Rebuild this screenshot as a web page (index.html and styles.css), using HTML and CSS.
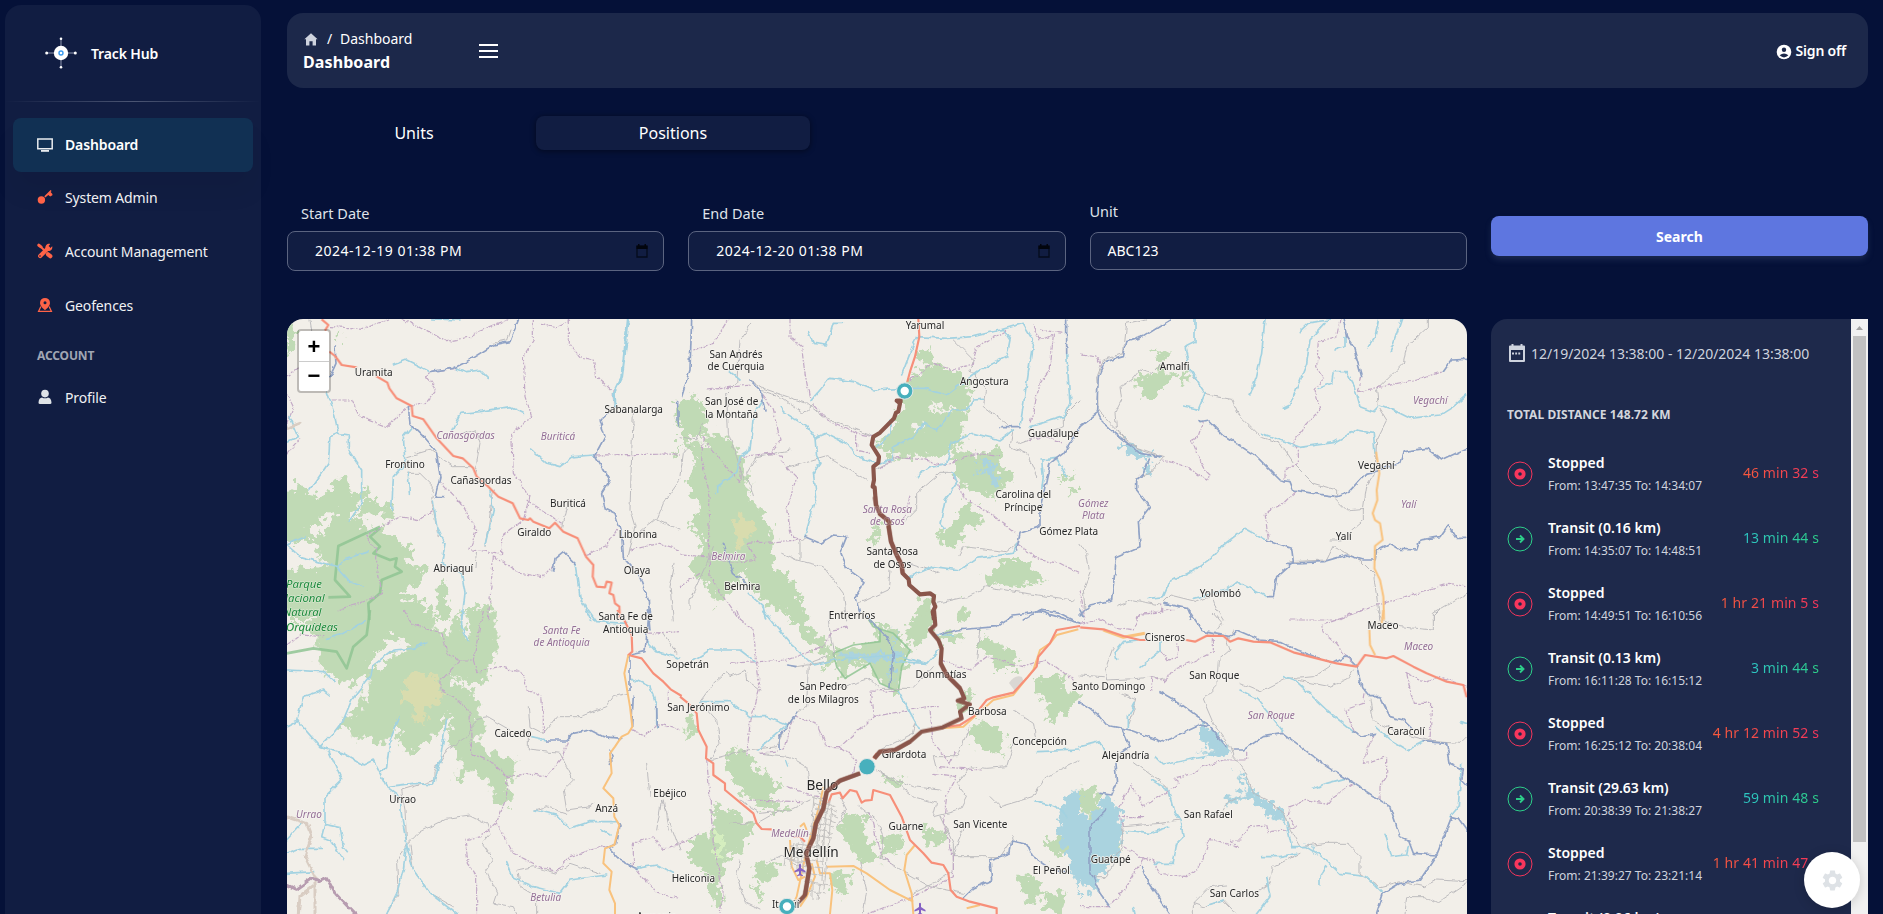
FILE: index.html
```html
<!DOCTYPE html>
<html lang="en">
<head>
<meta charset="utf-8">
<title>Track Hub - Dashboard</title>
<link rel="stylesheet" href="styles.css">
</head>
<body>
<div class="app">
  <aside class="sidebar">
    <div class="brand">
      <svg class="brand-logo" viewBox="0 0 32 32"><path d="M16 2v28M2 16h28" stroke="#8f96ae" stroke-width="1"/><g fill="#fff"><circle cx="16" cy="16" r="7.2"/><circle cx="16" cy="1.7" r="1.3"/><circle cx="16" cy="30.3" r="1.3"/><circle cx="1.7" cy="16" r="1.5"/><circle cx="30.3" cy="16" r="1.5"/></g><circle cx="16" cy="16" r="2" fill="#fff" stroke="#3b9bf0" stroke-width="1.4"/></svg>
      <span>Track Hub</span>
    </div>
    <div class="divider"></div>
    <nav class="nav">
      <a class="nav-item active"><svg class="ico" viewBox="0 0 16 16"><path d="M.8 1.9h14.4v9.9H.8z" fill="none" stroke="#e9ecef" stroke-width="1.5"/><path d="M4 13h8v1.8H4z" fill="#e9ecef"/></svg><span>Dashboard</span></a>
      <a class="nav-item"><svg class="ico" viewBox="0 0 16 16" fill="#ff6347"><circle cx="4.400" cy="11" r="3.700"/><path d="M7.300 7.300 13.600.9l1 1-1 1.200 1.800 1.900v1.200l-2.200 1.300-1.900-1.400-3 2.400z"/></svg><span>System Admin</span></a>
      <a class="nav-item"><svg class="ico" viewBox="0 0 16 16"><g stroke="#ff6347" stroke-linecap="round" fill="none"><path d="M3.2 13 11 5.200" stroke-width="4.200"/><path d="M2.500 2.500 7.500 7.500" stroke-width="1.800"/><path d="M11 11.300 13.300 13.200" stroke-width="4.200"/><path d="M1.800 2.200 4 3.900" stroke-width="3"/></g><path d="M8.500 5.500C8 2.500 10.500.2 13.300 1L11.400 3.200 11.800 4.700 13.300 5.100 15.200 3.200C16 6 13.500 8.500 10.700 8z" fill="#ff6347"/><circle cx="3" cy="13" r=".8" fill="#111d42"/></svg><span>Account Management</span></a>
      <a class="nav-item"><svg class="ico" viewBox="0 0 16 16"><path d="M3.900 9.500 1.600 14.300H14.400L12.100 9.500" fill="none" stroke="#ff6347" stroke-width="1.300"/><path d="M8 .9a5 5 0 0 1 5 5C13 9.500 8 13 8 13S3 9.500 3 5.900a5 5 0 0 1 5-5z" fill="#ff6347"/><circle cx="8" cy="5.700" r="1.500" fill="#111d42"/></svg><span>Geofences</span></a>
      <h6 class="nav-title">Account</h6>
      <a class="nav-item profile"><svg class="ico" viewBox="0 0 16 16" fill="#dee2e6"><circle cx="8" cy="4.600" r="3.800"/><path d="M1.500 13.700C1.500 10.300 3.300 8.600 5 8.500Q8 10.200 11 8.500C12.700 8.600 14.500 10.300 14.500 13.700Q14.500 15 13 15H3Q1.500 15 1.500 13.700z"/></svg><span>Profile</span></a>
    </nav>
  </aside>

  <main class="main">
    <header class="topbar">
      <div class="crumbs">
        <div class="crumb-line"><svg viewBox="0 0 14 13"><path d="M7 .3 13.600 6.300H12V12.500H8.600V8.300H5.400V12.500H2V6.300H.4z" fill="#ced3de"/></svg><i>/</i><span>Dashboard</span></div>
        <h1>Dashboard</h1>
      </div>
      <div class="burger"><span></span><span></span><span></span></div>
      <div class="signoff"><svg viewBox="0 0 16 16"><circle cx="8" cy="8" r="7.300" fill="#fff"/><circle cx="8" cy="5.700" r="2.200" fill="#1c284a"/><path d="M3.600 11.300Q8 7.500 12.400 11.300Q8 15.500 3.600 11.300z" fill="#1c284a"/></svg><span>Sign off</span></div>
    </header>

    <div class="tabs"><div class="tab">Units</div><div class="tab selected">Positions</div></div>

    <form class="filters">
      <div class="field date"><label>Start Date</label><div class="input"><span>2024-12-19 01:38 PM</span><svg viewBox="0 0 12 14"><path d="M1 2.500h10v10.500H1z" fill="none" stroke="#050b1c" stroke-width="1.300"/><path d="M.5 1.500h11V5H.5zM2 0h1.500v2H2zM8.500 0H10v2H8.500z" fill="#02050d"/></svg></div></div>
      <div class="field date"><label>End Date</label><div class="input"><span>2024-12-20 01:38 PM</span><svg viewBox="0 0 12 14"><path d="M1 2.500h10v10.500H1z" fill="none" stroke="#050b1c" stroke-width="1.300"/><path d="M.5 1.500h11V5H.5zM2 0h1.500v2H2zM8.500 0H10v2H8.500z" fill="#02050d"/></svg></div></div>
      <div class="field unit"><label>Unit</label><div class="input"><span>ABC123</span></div></div>
      <div class="search">Search</div>
    </form>

    <section class="content">
      <div class="map">
        <svg class="map-svg" viewBox="287 319 1180 595" width="1180" height="595">
          <defs>
            <filter id="rough" filterUnits="userSpaceOnUse" x="280" y="310" width="1195" height="610"><feTurbulence type="fractalNoise" baseFrequency=".14" numOctaves="3" seed="4"/><feDisplacementMap in="SourceGraphic" scale="20" xChannelSelector="R" yChannelSelector="G"/></filter>
            <filter id="wiggle" filterUnits="userSpaceOnUse" x="280" y="310" width="1195" height="610"><feTurbulence type="fractalNoise" baseFrequency=".13" numOctaves="2" seed="9"/><feDisplacementMap in="SourceGraphic" scale="5" xChannelSelector="R" yChannelSelector="G"/></filter>
          </defs>

          <g class="forest" filter="url(#rough)">
            <g transform="translate(280 310) scale(.33333)">
              <path d="M0 560 60 515 90 550 130 560 160 510 200 490 215 560 260 530 290 580 345 590 350 620 230 610 260 660 300 650 340 680 385 710 410 720 370 760 440 780 430 810 350 860 430 870 460 930 0 930V780L80 770 130 740 80 690 0 700zM560 930 600 880 640 880 640 930zM470 930 470 870 490 800 505 870 510 930zM10 50 40 30 45 110 20 150zM1180 440 1200 400V440zM1190 275h10v75h-10zM165 80l20 0-5 20z"/>
            </g>
            <g transform="translate(280 610) scale(.33333)">
              <path d="M80 0H460L470 60 500 80 540 0H640L655 80 620 215 560 215 520 195 590 260 600 330 620 350 590 380 600 410 660 440 710 455 700 500 680 520 700 560 690 585 650 580 630 520 580 480 540 510 520 510 550 460 520 420 500 390 490 350 440 400 380 430 350 370 300 410 260 370 230 400 210 350 170 350 220 310 250 270 270 200 240 190 230 230 160 200 110 160 120 120z"/>
            </g>
            <g transform="translate(680 310) scale(.33333)">
              <path d="M0 280 40 250 90 330 80 370 140 380 200 460 210 580 250 600 280 680 280 760 350 830 380 930 300 900 240 870 190 790 150 850 110 890 90 830 20 770 80 700 20 640 70 600 20 530 50 440 0 400zM690 200 760 160 840 190 880 240 850 340 850 400 780 440 650 440 600 430 590 400 640 360 670 280zM710 130 750 115 760 160 720 160zM820 420 900 430 970 410 960 480 1010 490 940 560 850 530 820 480zM850 580 890 600 910 640 850 650 850 700 790 700 760 670 810 650 830 620zM580 650 610 640 590 710 575 690zM910 800 980 750 1040 750 1100 820 1000 830 930 820zM720 870 760 860 760 930 700 930zM840 880 870 890 860 930 830 930zM1130 510l60-20-20 20zM1160 545l40-15v20z"/>
            </g>
            <g transform="translate(1080 310) scale(.33333)"><path d="M150 210 250 180 290 200 240 240 210 270 190 270 180 240zM210 120 270 125 260 140 240 150zM308 185h18v32h-16z"/></g>
            <g transform="translate(680 610) scale(.33333)">
              <path d="M300 0H360L390 50 450 110 465 150 420 190 440 140 380 90 340 40zM465 120 600 90 580 40 640 60 690 110 670 180 650 250 600 220 570 160 510 170 490 205 470 170zM690 40 740 10 760 30 720 110 680 90zM770 70 850 70 840 90 780 95zM840 0h30l-20 45zM900 70 950 100 1010 130 1010 180 950 180 940 140 900 120zM1070 200 1150 190 1160 240 1200 260 1160 310 1100 340 1100 280 1060 250zM870 350 920 335 980 370 970 430 920 430 880 390zM830 290 860 240 890 250 850 310zM20 320 45 310 40 380 20 380zM140 430 200 410 230 480 300 520 270 570 330 600 250 600 180 540 130 470zM100 590 150 600 220 650 190 720 140 740 120 820 130 880 110 900 80 800 30 750 30 690 100 660zM220 760l80-10-20 60-50 10zM200 820l50 20-10 30zM490 620 550 610 560 680 600 750 550 760 510 710 480 660zM600 690 660 660 670 720 610 740zM620 500l60 10-20 20-50-10zM730 640 760 670 800 660 790 700 740 710zM470 780 510 790 500 850 480 860 450 830zM1010 800 1060 800 1100 860 1040 880zM1090 690l60-10 20 50-50 10zM1100 850l60 0-20 62-50-20z"/>
            </g>
            <g transform="translate(1080 610) scale(.33333)"><path d="M0 540 50 530 60 570 50 620 0 600zM105 705l20-10v30z"/></g>
          </g>
          <g filter="url(#rough)">
            <g class="glade">
              <path transform="translate(280 310) scale(.33333)" d="M85 660 150 600 165 610 110 690zM20 735 90 735 150 765 90 775 20 765zM200 630 250 560 262 560 225 625z"/>
              <path transform="translate(280 610) scale(.33333)" d="M270 165 330 75 400 110 350 125 300 180zM540 10 555 10 570 90 555 95zM330 400 345 350 360 350 345 410zM480 400 492 320 515 310 500 400zM500 215 560 210 555 222 510 225z"/>
              <path transform="translate(680 310) scale(.33333)" d="M745 290 820 290 820 305 760 308zM30 380 80 380 80 400 30 395zM700 355 730 340 735 350 705 368z"/>
            </g>
            <g transform="translate(280 610) scale(.33333)" class="heath"><path d="M385 190 470 200 490 260 440 290 440 340 400 330 410 290 360 270z"/></g>
            <g transform="translate(680 310) scale(.33333)" class="heath"><path d="M150 640 190 610 235 660 200 680 200 710 170 720 170 670z"/></g>
            <g transform="translate(680 610) scale(.33333)" class="scrub"><path d="M105 650l25 30-5 80-20-20z"/></g>
            <g transform="translate(680 610) scale(.33333)" class="lake"><path d="M1150 560 1200 540V870L1160 740 1130 650z"/><path d="M480 135 640 130 640 50 650 130 680 140 640 150 640 220 628 150 500 148z"/></g>
            <g transform="translate(1080 610) scale(.33333)" class="lake"><path d="M0 620 60 600 65 560 90 560 125 620 125 700 90 770 40 810 60 860 0 810zM360 350 390 355 455 420 440 440 360 430 400 420 360 380zM440 560 510 540 590 590 620 640 560 610 500 560 440 590zM470 480l40 50 0 20-20-20zM680 705l40 20-30-5z"/></g>
            <g transform="translate(1080 310) scale(.33333)" class="lake"><path d="M125 390 170 420 240 440 180 445 130 430zM190 450l15 0 10 50-20-10z"/></g>
            <g transform="translate(680 310) scale(.33333)" class="lake"><path d="M890 450 950 455 930 470 965 500 940 535 930 500 890 480 920 470z"/></g>
          </g>
          <g transform="translate(280 310) scale(.33333)" class="park"><path d="M300 650 175 708 165 810 210 860 145 862M300 655 270 680 300 710 280 730 330 750 350 745 345 770 365 785 305 810 300 850 265 880 268 930"/></g>
          <g transform="translate(280 610) scale(.33333)" class="park"><path d="M20 130 100 115 170 125 200 175 220 110 260 75 270 0"/></g>
          <g transform="translate(680 610) scale(.33333)" class="park thin"><path d="M560 20 580 50 640 70 690 120 665 170 655 245 600 220 570 160 495 205 470 170 460 130 520 105 600 95 600 60z"/></g>
          <path d="M1009 683q6-9 13-6l2 6-9 8z" fill="#dad7d3"/>

          <g filter="url(#wiggle)" class="lines">
            <!-- north-west -->
            <g transform="translate(280 310) scale(.33333)">
              <path class="g" d="M90 30 95 60M540 375 585 360 600 400 585 490M380 440 450 420 520 470 580 470M380 490 420 490 460 530 455 570 475 680M1060 310 1055 430 1050 600 1065 650 1045 740M1200 510 1150 580 1130 630 1200 660M1130 625 1075 670M640 540 625 650 615 710M590 720 585 770M860 590 845 650M690 60 680 90 635 100M1180 930 1170 830 1185 760"/>
              <path class="a" d="M150 50 250 55 330 27M360 27 420 50 500 95 570 80 600 60 690 27M155 270 215 270 240 320 320 350 385 290 440 280 470 240 440 200 450 185 530 175M760 30 760 90 730 140 735 260 755 320 695 370 700 490 750 560 730 630 665 680 665 735 570 715 590 660 550 590 480 515M865 27 865 100 900 140 940 150 950 200 1000 245 1000 280M945 435 1200 432M460 600 420 630 360 620 260 680 290 720 290 760 305 850 240 880 170 900M640 740 720 790 790 800 820 770M640 740 625 930M915 735 980 710 1010 660M1050 720 1140 700 1200 720M740 570 800 610 845 640M20 250 40 290 20 350M20 200 60 170M20 430 60 385 M780 40 830 50 870 30"/>
              <path class="w" d="M140 240 160 300 175 370 150 380 145 460 90 540M175 370 205 375 205 420 245 480 245 580 210 630M340 165 380 150 450 185M530 175 560 185 600 180 625 205M515 365 540 310 600 305 690 290 730 310M395 350 370 380 375 460 340 500 335 600M385 490 388 550M755 420 800 460 840 470 880 440 945 435M630 540 640 600 615 705M460 570 470 650 495 700 485 760 545 790 555 850 545 930M885 760 900 860 935 930M20 705 60 740 170 770 200 745 265 725M170 770 210 815 250 830M455 27 540 30M20 705 75 680M30 320 55 380 20 395"/>
              <path class="w wide" d="M1045 27 1035 120 1025 200 1003 245 1005 290"/>
              <path class="b" d="M715 30 690 95 640 105 560 155 520 175 450 185M385 290 390 340 430 380 470 430 480 500 465 560 490 560M1003 290 960 330 975 380 945 435 990 510 965 550 975 595 1005 610 1025 670 1030 740 1075 790 1105 870 1110 930M820 780 825 745 850 725 885 760M165 110 168 160 150 200M1193 275 1195 350"/>
              <path class="s" d="M20 355 60 340"/>
            </g>
            <!-- south-west -->
            <g transform="translate(280 610) scale(.33333)">
              <path class="g" d="M590 325 620 320 690 360M590 330 560 380 500 420 465 480 465 510 365 540 375 600 380 700 350 760 355 850 320 912M380 705 420 665 500 625 570 615 620 640 630 670 605 700 640 750 620 780 650 850 640 880 700 890 710 912M390 705 400 780 450 850 520 890M745 290 750 350 790 370 830 320 900 320 980 290 1000 260 1040 250M745 370 745 420 840 430 860 470 880 510 850 540 860 600 930 590 945 580M765 600 800 590 860 610M1200 720 1145 570 1130 660M1150 570 1165 660M710 780 760 770 830 790 870 760 960 790M715 790 720 830 770 860 770 912M1100 460 1110 560M1150 70 1190 130"/>
              <path class="a" d="M370 0 400 45 450 60 490 75 500 130 530 150 580 150 590 185 660 170 730 190 740 240 785 260 790 330 790 370M540 150 480 215 480 240 530 265 570 310 575 430 640 460 680 500 680 560 650 640 700 730 780 770 830 785 870 740 960 710 985 715M680 500 750 490 800 500 850 440 865 395M650 640 600 680 555 690 565 760 590 800 590 912M20 105 60 75 130 80M610 0 580 150M1060 770 1060 700 1120 680 1150 720 1200 700M1070 780 1130 850 1200 865M1050 360 1095 380 1130 340 1200 360M1165 290 1165 240M1100 70 1200 65"/>
              <path class="w" d="M20 180 130 185 165 215M150 255 130 240 70 260 50 330 120 410 160 370 190 330 215 270 270 200 275 170 340 120 400 115 440 98M140 85 180 75 255 35M120 410 190 430 250 465 280 450 300 490 320 530 360 560 365 620 380 700 370 780 350 850 320 912M300 490 320 470 330 390 360 320M320 530 400 520 460 525 480 450 500 325M145 420 185 510 135 560 135 640 180 650 190 710 205 728M135 640 125 680 150 690 190 750M380 705 400 780 450 850 530 912M20 730 60 715 125 715M20 790 105 785M20 690 70 635M20 350 50 335M545 0 545 50 565 95M765 600 830 615 870 655 930 635 1010 635M965 660 990 675M680 755 700 805 760 830 840 850 870 810 980 795M1070 775 1130 765 1180 790M755 380 800 390M1055 205 1110 230 1130 290 1130 350M925 0 950 35 1040 40M1100 90 1130 125 1200 145"/>
              <path class="b" d="M800 390 860 390 880 370 930 360 970 380 1025 385M1105 30 1095 125 1050 135 1050 240M1130 290 1132 350M985 715 1020 750 1070 775M1010 630 1020 650 1010 700 980 715M1060 260 1055 350M990 420 1000 440 985 460M1105 0 1110 60"/>
              <path class="s" d="M20 620 80 640 95 680 75 740 105 800 105 912M55 912 60 860 100 830"/><path class="p" d="M20 825 50 838 95 805 120 812 140 803 165 850 225 912"/>
            </g>
            <!-- north-centre -->
            <g transform="translate(680 310) scale(.33333)">
              <path class="g" d="M215 40 180 90 175 160 170 220 140 250 145 370 170 440 190 510M210 210 250 235 380 280 430 320 580 380M240 240 300 260 370 310 400 285M320 475 440 440 560 510M0 380 50 390 70 340M30 410 10 430 0 500M220 560 200 490 230 440 330 420M305 730 350 750 430 770 490 850 500 930M360 750 360 700 380 680M630 780 625 840 560 870 530 880M690 760 780 790M680 630 710 600 710 550 780 490 820 490M820 90 880 150 870 180 920 240 910 290 990 350M590 475 650 445M840 740 850 710 980 725 1010 700M770 880 860 860 920 830 1040 850 1180 870M1000 360 990 410 1040 430 1070 500M1200 270 1150 320 1150 350 1010 400M100 710 80 760 30 870 30 900"/>
              <path class="a" d="M40 120 100 100 145 27M330 27 330 80 365 110 375 190 390 270M80 240 210 225M245 250 280 300 300 390 270 430 180 440 180 520 80 400M400 285 440 330 530 370 580 380M530 370 530 420 570 430M300 450 350 500 320 600 335 680 365 690 200 700 230 750 160 760 80 740 0 735M70 380 65 450 90 560 85 700 90 800 180 930M270 430 310 440M600 475 650 440 720 445 790 465 820 455 890 430 960 440M820 500 850 560 930 610 1010 670M670 630 690 560M690 210 760 160 820 180 880 160 890 110 980 60M1060 50 1080 90 1120 75 1110 180 1080 220 1050 340M1040 390 1100 380 1150 400M1010 700 1080 750 1140 760 1200 790M0 830 60 790M1150 70 1080 60"/>
              <path class="w" d="M385 65 400 100 440 105 460 40 490 40M390 275 420 240 450 205 520 215 580 240 670 235M670 235 730 235 800 255 900 180 980 140 990 90 970 60M665 195 690 130 710 80 800 85 880 80 960 60 1030 40 1060 90 1040 220 1020 350M300 290 310 305 380 350 405 385 440 370 500 400 530 440 590 460 640 450 640 410 700 380 730 340 770 360 820 300 860 300 880 270 910 268M405 385 410 440 420 460 400 490 410 560 380 660 375 680M590 410 630 370 630 330M710 500 750 470 800 460 815 400 880 370 960 390 1000 360M1160 130 1170 280 1150 320 1050 350M820 490 830 520 795 570 780 640 795 655M690 800 760 770 840 780 890 745 1000 730 1010 700M110 550 110 530 170 490 180 440 210 420 220 320 250 270M150 185 180 210M205 850 250 890 260 930M1085 450 1090 500 1085 540M1080 450 1130 445 1160 500"/>
              <path class="b" d="M35 27 30 180 5 260M210 210 240 240 255 300M1160 30 1160 130M375 680 420 700 460 675 500 680 480 730 500 775 555 815 525 860 540 910M1200 350 1150 430 1110 460 1080 600 1080 650 1020 670 1010 720M1030 930 1080 900 1140 910 1180 930M960 350 1020 350M130 700 160 790 210 830"/>
            </g>
            <!-- north-east -->
            <g transform="translate(1080 310) scale(.33333)">
              <path class="g" d="M200 27 140 40 130 130 70 150 50 200 55 300 140 390 180 420 240 440M240 165 215 190 180 180 155 210 120 230 125 270 105 310 110 360 150 405 250 440 210 490 170 505M340 200 380 255 455 268 480 320 540 380 600 400 640 460 670 490 700 520 770 540 770 560M760 560 800 600 850 595 850 630 815 660M1045 27 1045 50 980 110 970 160 890 240 895 290 920 330 890 390 885 490 860 530 850 600M630 755 740 750 760 710 840 750 880 790 900 930M780 690 750 690M0 700 20 730 30 790 10 840 15 900M110 890 160 870 240 885 270 855 350 875 440 840M400 870 410 900 430 930M1160 850 1060 910 1060 930"/>
              <path class="a" d="M0 135 50 140 70 180M780 27 770 80 715 95 710 170 730 200 705 240 720 300 680 340 640 400 655 420 655 460 615 480 615 515M835 245 1000 210 1090 185M845 200 835 245M370 335 355 380 335 390 350 430 375 480 390 495 380 510 320 470 250 450M645 545 610 580 555 610 565 690M630 930 760 930 910 880 1040 840 1110 820 1160 830M170 930 180 912 245 910 245 880M0 840 15 930"/>
              <path class="w" d="M345 27 345 95 315 110 330 180 375 250 355 298 310 288M555 27 545 130 530 200 510 255M750 30 690 38 658 68M735 40 690 90 680 160 660 210 630 285 610 295M765 120 795 110 795 80M965 27 940 100 930 125M895 30 885 80 865 110M718 235 755 220 760 185 800 185 820 220 840 290 880 305 895 290M900 285 940 300 990 325 1080 315 1120 290 1160 255M545 370 600 390 660 412 760 398 830 360 880 370 885 430M205 865 250 860 270 815 350 775 400 740 430 705 495 655 560 690M340 865 440 840 470 815 560 860"/>
              <path class="b" d="M270 30 190 80 140 95 130 140 75 155 55 200 50 300 70 340 130 390 180 430 240 440M790 27 800 80 820 110 845 200M1090 185 1115 150 1160 148M360 335 385 330 430 375 530 440 600 510 630 515 640 540 700 550 770 560 810 545 860 490 960 460 970 425 1040 415 1085 450 1160 415M560 690 635 715 640 755 590 800 580 860 560 860M620 760 730 755 800 735 850 750 885 750 890 720 930 700 960 718 1010 720 1020 690 1080 680 1105 645 1130 685 1160 685M205 450 190 490 170 510 170 540 210 590 175 635 180 710 110 740 95 870 30 885 0 915M0 350 50 310M255 880 320 895 335 930"/>
            </g>
            <!-- south-centre -->
            <g transform="translate(680 610) scale(.33333)">
              <path class="g" d="M445 30 455 100 465 150 350 170M60 275 100 220 140 185 150 200 195 180 200 210 240 240M60 275 110 330 120 400 90 450M440 140 385 160 380 290 350 310 320 350 290 410 200 420 90 450M460 240 570 205 600 235 700 235 760 170M240 430 330 440 380 470 390 530 420 550M590 480 650 520 700 560 770 580 760 620 840 600 860 560 830 520 870 470 920 475 980 470 1000 400M770 480 760 440 830 440 870 350M930 560 960 590 1060 560 1100 500 1200 450M180 570 240 610 330 600 390 570M540 590 590 630 610 680 600 740 680 790 750 830 850 850M180 750 170 800 200 880 240 900M260 760 300 740 340 750M780 620 820 700 820 780 760 820 700 850M850 650 820 740 960 740 1000 680M540 760 560 840 550 912M900 50 890 150M1000 300 1060 340 1070 400M700 350 710 330 700 370 600 420M780 540 700 530 600 490M480 560 500 600 470 650M150 640 230 640 300 600"/>
              <path class="a" d="M170 0 180 30 220 60 230 160 240 230 210 340 200 440M150 160 320 150 430 110 460 60 510 50M240 430 310 420 340 320 410 340 440 410 480 410 560 340 580 320 570 240 650 245M580 320 740 290 780 290M80 450 90 560 100 700 130 850 120 912M200 570 370 575M480 410 530 450 520 490M750 300 760 400 810 460 830 420M780 150 870 180 920 140 1030 170 1100 150 1180 210M760 490 830 500 800 560 790 640 820 740 820 800 700 860 560 912M570 610 600 730 640 770M320 530 440 570M780 470 900 480M0 700 60 670"/>
              <path class="w" d="M250 0 330 100 400 165 465 150M40 150 90 120 180 120 225 155M60 275 150 275 210 320 260 320 320 345 280 380 235 420M655 245 720 360 M650 155 740 160 775 120M460 150 640 135 740 160M1065 575 1130 590 1160 620M320 450 325 465M770 75 820 75M1070 425 1200 420"/>
              <path class="b" d="M780 75 830 60 950 50 1000 15 1080 5 1200 40M850 865 880 835 935 810 930 750 990 730 995 690 1040 700 1060 740 1120 780 1160 790M560 20 620 80 640 130 630 230M350 170 320 165M300 420 300 380 350 310"/>
            </g>
            <!-- south-east -->
            <g transform="translate(1080 610) scale(.33333)">
              <path class="g" d="M100 110 75 180 80 210 180 205 220 200 250 210M0 195 70 200M120 250 170 270 145 350M460 60 440 90 450 120 415 150 410 230 370 270 400 340 450 410 460 440 500 490 520 550 560 570 610 610 630 660 660 710 740 700 800 700 840 740 840 790 900 830 960 815 1030 830 1070 810 1160 815M480 220 540 245 610 210 650 205 700 200 760 160M650 210 750 230 800 210 820 180M870 270 880 330 960 370 1060 395 1140 400 1160 380M160 455 260 530 280 600 300 630 240 640 130 650M660 730 580 770 570 820 540 840M340 912 340 880 390 830 440 825M340 880 370 890 430 870 470 912M1160 820 1070 880 1030 860 980 860 975 912M430 600 440 580 480 560M890 0 910 30 960 50 1060 60 1060 20 1080 0M400 75 425 40 400 10M130 640 125 710 80 800 40 800"/>
              <path class="a" d="M0 40 60 30 100 50 160 60 180 10 280 0M240 120 265 150 295 140 290 100M400 85 400 125 350 150 280 180 250 215 215 200 215 240M850 0 770 30 725 45 730 70 770 100 820 170M980 190 1000 280 1055 280 1050 390M980 190 1030 215 1080 200 1160 230M855 250 850 280 795 300 825 370M880 370 850 460 920 440 920 500 900 530 900 570M820 520 760 560 745 580 680 570 630 590 625 620 650 650 620 660 565 665 560 645 510 650 480 690 450 690 475 712 390 685 360 770 320 800 240 790 220 750 190 745M500 425 500 450 430 450 370 470 340 490 280 505 300 520 240 560 190 590 155 525 110 600M190 745 130 710M190 745 130 840 90 890 0 890M190 620 120 620 130 650"/>
              <path class="w" d="M240 95 240 125 180 172M175 90 130 95 105 125 110 148M165 280 145 320 145 355M0 410 60 395 75 430M610 200 650 215 740 300 820 365M480 240 530 265 560 300 610 365M225 440 250 465 320 450 400 435M215 510 265 540 280 600 300 630 310 680 290 700 280 760 220 760M145 665 210 670 270 650M700 535 740 520 795 505M915 670 935 740 980 735 985 710M545 740 600 740 650 730M680 710 720 735 780 790 860 800 910 850M740 770 720 800 720 825M885 350 930 390 980 420 1030 395M560 800 570 860 530 912M385 885 430 870M160 890 165 912M1110 620 1135 590 1145 460M620 640 635 710 680 710M1140 335 1160 340"/>
              <path class="b" d="M325 0 370 65 450 80 470 60 540 90 600 95 650 120 760 160 800 140 830 170 845 230 870 260 900 260 930 320 970 330 1000 360M240 245 300 280 380 340 440 410M0 275 50 310 80 345 150 360 250 397 360 345 385 350M460 420 490 420 550 380 610 370 740 470 820 520 930 590 960 680 985 690 1000 730 1070 735M820 365 840 378 885 370M1030 395 1100 400 1110 460 1150 480 1145 510 1160 525M890 912 910 850 960 820 1020 810 1070 735 1115 620 1135 625 1160 660M185 770 200 810 270 912M125 355 150 410 120 430M105 460 110 520 95 555 60 550M80 600 30 650 30 780 60 850 90 890M0 0 10 20"/>
            </g>
          </g>

          <g class="roads">
            <g transform="translate(280 310) scale(.33333)">
              <path class="t" d="M125 28 145 45 135 62M148 125 165 138 185 165 230 172M288 198 322 218 328 235 350 265 395 288 398 318 430 328 470 385 520 438 548 445 580 475 590 500 625 530 655 560 698 580 720 625 745 630 750 625 760 635 808 655 825 638 850 665 893 685 918 740 940 765 938 800 950 830 975 832 980 815 995 818 988 850 1000 855 1005 880 1018 890 1020 930"/>
            </g>
            <g transform="translate(280 610) scale(.33333)">
              <path class="t" d="M1012 0 1018 12M1030 25 1055 75 1057 125 1045 135 1085 145 1120 190 1150 215 1172 238 1205 258"/>
              <path class="o" d="M1045 135 1033 190 1050 290 1057 350 1045 370 1025 380 1005 410 990 430 995 490 970 535 1000 565 1003 620 1018 645 1003 705 975 715 970 760 995 785 988 840 1005 880 1005 912"/>
            </g>
            <g transform="translate(680 310) scale(.33333)"><path class="t" d="M715 27 718 80 705 140 690 185 682 215"/></g>
            <g transform="translate(1080 310) scale(.33333)"><path class="o" d="M888 425 898 490 890 540 892 570 878 610 885 630 900 640 908 690 885 708 883 775 900 810 910 860 912 930"/></g>
            <g transform="translate(680 610) scale(.33333)">
              <path class="o" d="M785 355 850 350 900 305 940 270 1000 255 1060 180 1080 120 1110 100 1130 75 1195 58M430 530 420 580 380 720 350 860 340 880M330 690 335 770 355 810 375 800M440 770 520 768 560 790 630 840 700 875M700 912 695 850 673 780 680 735 705 705M410 750 420 790 450 790 457 840 450 912M360 650 372 640 380 660M395 760 405 800 380 860 360 890M860 895 900 885"/>
              <path class="t" d="M0 260 25 280 50 310 55 360 80 410 78 445 100 460 100 495 135 520 135 540 220 610 230 640 245 657 275 658M340 680 360 680 375 695M445 580 455 553 480 548 488 565 510 540 530 545 545 578 555 572 575 570 580 540 630 555 665 620 690 690 730 730 755 758 790 765 805 790 812 840 830 860 870 875 950 895 950 912M580 445 590 430M805 350 840 345 880 320 920 270 940 262 1000 248 1040 205 1070 170 1075 140 1110 100 1130 60 1200 48"/>
            </g>
            <g transform="translate(1080 610) scale(.33333)"><path class="o wide" d="M70 60 130 82 195 70"/><path class="o" d="M910 0 905 40M868 60 870 105 885 135"/><path class="t" d="M0 52 70 58 130 78 180 90 200 90M318 90 345 95 380 77 430 78 450 95 475 85 520 95 570 97 640 127 710 145 770 160 830 170 855 135 920 145 940 138 1000 170 1040 190 1100 215 1150 225 1160 262"/></g>
          </g>
          <g class="streets" filter="url(#wiggle)"><path d="M812 797 835 806M814 803 836 812M816 808 838 817M814 814 836 822M812 820 834 828M810 826 833 834M806 834 832 838M796 844 828 848M790 850 826 856M788 856 824 862M792 864 822 868M798 872 826 876M806 882 830 886M802 890 826 894M814 796 810 850M820 798 816 860M826 802 822 880M832 806 824 890M798 842 798 870M792 845 794 862M806 880 804 900M812 880 812 900M820 884 818 900M794 842 790 868M786 852 784 866M802 840 802 874M790 860 812 864M790 846 812 850M829 800 822 850M823 800 818 850"/></g>

          <g class="route">
            <path transform="translate(680 310) scale(.33333)" d="M668 272 650 272 660 280 655 305 648 308 642 325 600 368 580 380 575 405 597 440 595 458 580 470 582 510 578 530 584 532 588 585 600 612 628 635 626 650 633 695 650 735 665 765 668 790 686 808 688 825 720 853 750 850 762 858 760 875 766 890 758 905 762 930"/>
            <path transform="translate(680 610) scale(.33333)" d="M762 0 766 45 750 60 775 90 785 115 782 160 800 195 840 235 853 265 833 272 870 283 840 305 845 325 788 352 725 365 690 395 645 420 600 425 583 445M540 490 480 512 440 545 430 595 408 640 400 685 378 730 388 775 375 855 352 880"/>
          </g>

          <g class="places">
            <g transform="translate(280 310) scale(.33333)"><text x="281" y="197">Uramita</text><text x="1061" y="308">Sabanalarga</text><text x="375" y="475">Frontino</text><text x="603" y="521">Cañasgordas</text><text x="864" y="592">Buriticá</text><text x="763" y="679">Giraldo</text><text x="1074" y="684">Liborina</text><text x="520" y="785">Abriaquí</text><text x="1071" y="793">Olaya</text><text x="1037" y="931">Santa Fe de</text><text x="1037" y="970">Antioquia</text>
              <g class="region"><text x="557" y="386">Cañasgordas</text><text x="834" y="390">Buriticá</text></g>
              <g class="reserve"><text x="72" y="833">Parque</text><text x="67" y="876">Nacional</text><text x="67" y="919">Natural</text><text x="96" y="962">Orquídeas</text></g></g>
            <g transform="translate(280 610) scale(.33333)"><text x="699" y="382">Caicedo</text><text x="368" y="578">Urrao</text><text x="980" y="607">Anzá</text><text x="1170" y="560">Ebéjico</text><text x="1240" y="817">Heliconia</text><text x="1223" y="173">Sopetrán</text><text x="1255" y="303">San Jerónimo</text><text x="1130" y="931">Armenia</text>
              <g class="region"><text x="845" y="72">Santa Fe</text><text x="845" y="108">de Antioquia</text><text x="87" y="624">Urrao</text><text x="797" y="872">Betulia</text></g></g>
            <g transform="translate(680 310) scale(.33333)"><text x="735" y="57">Yarumal</text><text x="168" y="143">San Andrés</text><text x="168" y="181">de Cuerquia</text><text x="155" y="286">San José de</text><text x="155" y="324">la Montaña</text><text x="913" y="226">Angostura</text><text x="1120" y="382">Guadalupe</text><text x="1030" y="565">Carolina del</text><text x="1030" y="602">Príncipe</text><text x="1166" y="675">Gómez Plata</text><text x="637" y="736">Santa Rosa</text><text x="637" y="774">de Osos</text><text x="187" y="840">Belmira</text><text x="516" y="926">Entrerríos</text>
              <g class="region"><text x="622" y="608">Santa Rosa</text><text x="622" y="644">de Osos</text><text x="145" y="751">Belmira</text></g></g>
            <g transform="translate(1080 310) scale(.33333)"><text x="284" y="179">Amalfi</text><text x="889" y="478">Vegachí</text><text x="791" y="689">Yalí</text><text x="421" y="860">Yolombó</text>
              <g class="region"><text x="1051" y="281">Vegachí</text><text x="986" y="593">Yalí</text><text x="40" y="592">Gómez</text><text x="40" y="628">Plata</text></g></g>
            <g transform="translate(680 610) scale(.33333)"><text x="783" y="205">Donmatías</text><text x="430" y="240">San Pedro</text><text x="430" y="278">de los Milagros</text><text x="922" y="314">Barbosa</text><text x="672" y="445">Girardota</text><text x="1079" y="405">Concepción</text><text x="678" y="659">Guarne</text><text x="901" y="653">San Vicente</text><text x="1114" y="792">El Peñol</text><text x="317" y="895">Itagüí</text>
              <g class="city"><text x="427" y="540">Bello</text><text x="393" y="740">Medellín</text></g><g class="region"><text x="330" y="681">Medellín</text></g></g>
            <g transform="translate(1080 610) scale(.33333)"><text x="255" y="92">Cisneros</text><text x="86" y="239">Santo Domingo</text><text x="403" y="208">San Roque</text><text x="137" y="448">Alejandría</text><text x="385" y="625">San Rafael</text><text x="92" y="759">Guatapé</text><text x="463" y="860">San Carlos</text><text x="909" y="57">Maceo</text><text x="978" y="375">Caracolí</text>
              <g class="region"><text x="574" y="326">San Roque</text><text x="1016" y="120">Maceo</text></g></g>
          </g>
          <g class="route over">
            <path transform="translate(680 310) scale(.33333)" d="M584 560 588 585 600 612 628 635 626 650 633 695 650 735 665 765 668 790"/>
            <path transform="translate(680 610) scale(.33333)" d="M782 160 800 195 840 235M690 395 645 420 600 425 583 445M540 490 480 512 440 545 430 595 408 640 400 685 378 730 388 775 375 855"/>
          </g>
          <g class="plane"><path d="M-1-5.500Q0-7 1-5.500V-2L5.500 1V2.500L1 1V4L3 5.500V6.300L0 5.500-3 6.300V5.500L-1 4V1L-5.500 2.500V1L-1-2z" transform="translate(800 870)"/><path d="M-1-5.500Q0-7 1-5.500V-2L5.500 1V2.500L1 1V4L3 5.500V6.300L0 5.500-3 6.300V5.500L-1 4V1L-5.500 2.500V1L-1-2z" transform="translate(920 909)"/></g>
          <g class="marker"><circle cx="904.700" cy="391" r="8.200"/><circle cx="904.700" cy="391" r="5.200"/><circle class="solid" cx="867" cy="766.700" r="8.200"/><circle cx="787" cy="906.500" r="8.200"/><circle cx="787" cy="906.500" r="5.200"/></g>
        </svg>
        <div class="zoom"><span>+</span><span>−</span></div>
      </div>

      <aside class="panel">
        <div class="panel-body">
          <div class="range"><svg viewBox="0 0 18 20"><path d="M2 3.500h14v14.500H2z" fill="none" stroke="#ced3de" stroke-width="2" stroke-linejoin="round"/><path d="M2 3h14v4H2zM3.500 1h2v3h-2zM12.500 1h2v3h-2zM4 9.500h2v2H4zM7.200 9.500h1.900v2H7.200zM10.300 9.500h1.900v2h-1.900z" fill="#ced3de"/></svg><span>12/19/2024 13:38:00 - 12/20/2024 13:38:00</span></div>
          <h6 class="total">Total distance 148.72 km</h6>
          <ul class="trips">
            <li class="stop"><svg viewBox="0 0 26 26"><circle class="ring" cx="13" cy="13" r="12"/><circle class="dot" cx="13" cy="13" r="3.700"/></svg><div><b>Stopped</b><p>From: 13:47:35 To: 14:34:07</p></div><em>46 min 32 s</em></li>
            <li class="move"><svg viewBox="0 0 26 26"><circle class="ring" cx="13" cy="13" r="12"/><path class="arr" d="M9 13H16.500M13 9.500 16.500 13 13 16.500"/></svg><div><b>Transit (0.16 km)</b><p>From: 14:35:07 To: 14:48:51</p></div><em>13 min 44 s</em></li>
            <li class="stop"><svg viewBox="0 0 26 26"><circle class="ring" cx="13" cy="13" r="12"/><circle class="dot" cx="13" cy="13" r="3.700"/></svg><div><b>Stopped</b><p>From: 14:49:51 To: 16:10:56</p></div><em>1 hr 21 min 5 s</em></li>
            <li class="move"><svg viewBox="0 0 26 26"><circle class="ring" cx="13" cy="13" r="12"/><path class="arr" d="M9 13H16.500M13 9.500 16.500 13 13 16.500"/></svg><div><b>Transit (0.13 km)</b><p>From: 16:11:28 To: 16:15:12</p></div><em>3 min 44 s</em></li>
            <li class="stop"><svg viewBox="0 0 26 26"><circle class="ring" cx="13" cy="13" r="12"/><circle class="dot" cx="13" cy="13" r="3.700"/></svg><div><b>Stopped</b><p>From: 16:25:12 To: 20:38:04</p></div><em>4 hr 12 min 52 s</em></li>
            <li class="move"><svg viewBox="0 0 26 26"><circle class="ring" cx="13" cy="13" r="12"/><path class="arr" d="M9 13H16.500M13 9.500 16.500 13 13 16.500"/></svg><div><b>Transit (29.63 km)</b><p>From: 20:38:39 To: 21:38:27</p></div><em>59 min 48 s</em></li>
            <li class="stop"><svg viewBox="0 0 26 26"><circle class="ring" cx="13" cy="13" r="12"/><circle class="dot" cx="13" cy="13" r="3.700"/></svg><div><b>Stopped</b><p>From: 21:39:27 To: 23:21:14</p></div><em>1 hr 41 min 47 s</em></li>
            <li class="move last"><svg viewBox="0 0 26 26"><circle class="ring" cx="13" cy="13" r="12"/></svg><div><b>Transit (0.06 km)</b></div></li>
          </ul>
        </div>
        <div class="scroll"><svg viewBox="0 0 17 17"><path d="M5 11 8.500 7 12 11z" fill="#a3a3a3"/></svg><div class="thumb"></div></div>
      </aside>
    </section>
  </main>
  <div class="fab"><svg viewBox="0 0 24 24"><path d="M19.140 12.940c.04-.3.060-.61.060-.94 0-.32-.02-.64-.07-.94l2.030-1.580c.18-.14.230-.41.120-.61l-1.920-3.320c-.12-.22-.37-.29-.59-.22l-2.390.96c-.5-.38-1.030-.7-1.620-.94l-.36-2.540c-.04-.24-.24-.41-.48-.41h-3.840c-.24 0-.43.17-.47.41l-.36 2.540c-.59.240-1.130.57-1.620.94l-2.390-.96c-.22-.08-.47 0-.59.22L2.740 8.870c-.12.210-.08.470.12.610l2.030 1.580c-.05.300-.09.630-.09.940s.02.640.07.940l-2.030 1.580c-.18.140-.23.410-.12.610l1.920 3.320c.12.220.37.290.59.220l2.390-.96c.5.380 1.030.7 1.620.94l.36 2.540c.05.240.24.410.48.410h3.840c.24 0 .44-.17.470-.41l.36-2.540c.59-.24 1.130-.56 1.620-.94l2.390.96c.22.080.47 0 .59-.22l1.920-3.320c.12-.22.070-.47-.12-.61l-2.010-1.580zM12 15.600c-1.980 0-3.600-1.620-3.600-3.600s1.620-3.600 3.600-3.600 3.600 1.620 3.600 3.600-1.620 3.600-3.600 3.600z" fill="#dee2e6"/></svg></div>
</div>
</body>
</html>
```
FILE: styles.css
```css
* { box-sizing: border-box; }
html, body { margin: 0; height: 100%; overflow: hidden; }
body { background: #051138; font-family: "Noto Sans", "Open Sans", sans-serif; color: #fff; }
svg { display: block; flex: none; }
.app { display: flex; height: 914px; overflow: hidden; }

/* Sidebar */
.sidebar { width: 256px; margin: 5px 26px 0 5px; height: 940px; background: #111d42; border-radius: 16px; flex: none; }
.brand { display: flex; align-items: center; gap: 14px; height: 96px; padding: 0 0 0 40px; font-size: 14px; font-weight: 600; letter-spacing: -.15px; }
.brand-logo { width: 32px; height: 32px; }
.divider { height: 1px; background: linear-gradient(to right, transparent, #4b5573, transparent); }
.nav { padding: 16px 8px 0; }
.nav-item { display: flex; align-items: center; gap: 12px; height: 54px; padding: 0 0 4px 24px; font-size: 14px; color: #f0f1f4; letter-spacing: -.13px; }
.nav-item.active { padding-bottom: 1px; background: #113053; border-radius: 8px; font-weight: 600; color: #fff; box-shadow: 0 20px 27px 0 rgba(0,0,0,.05); }
.ico { width: 16px; height: 16px; }
.nav-title { margin: 12px 0 0; padding-left: 24px; font-size: 12px; line-height: 20px; text-transform: uppercase; color: #a0a5b3; letter-spacing: -.15px; }
.profile { margin-top: 6px; }

/* Main column */
.main { width: 1581px; display: flex; flex-direction: column; }
.topbar { margin-top: 13px; height: 75px; border-radius: 16px; background: #1c284a; display: flex; align-items: center; padding: 0 22px 0 16px; flex: none; }
.crumbs { width: 176px; }
.crumb-line { display: flex; align-items: center; font-size: 14px; line-height: 20px; padding-top: 1px; }
.crumb-line svg { width: 14px; height: 13px; margin: 0 9px 0 1px; }
.crumb-line i { font-style: normal; width: 13px; }
.crumbs h1 { margin: 2px 0 0; font-size: 16px; line-height: 22px; font-weight: 700; letter-spacing: .1px; }
.burger { width: 19px; display: grid; gap: 4px; }
.burger span { height: 2px; background: #fff; }
.signoff { margin-left: auto; display: flex; align-items: center; gap: 4px; font-size: 14px; font-weight: 600; letter-spacing: -.2px; }
.signoff svg { width: 16px; height: 16px; margin-top: 2px; }
.tabs { display: flex; margin-top: 28px; height: 34px; padding-left: 5px; flex: none; }
.tab { width: 244px; display: flex; align-items: center; justify-content: center; font-size: 16px; }
.tab.selected { width: 274px; background: #111d42; border-radius: 8px; box-shadow: 0 1px 5px 1px rgba(0,0,0,.35); }

/* Filters */
.filters { display: grid; grid-template-columns: repeat(4, 1fr); gap: 24px; margin-top: 52px; height: 69px; flex: none; align-items: start; }
.field label { display: block; font-size: 14.500px; line-height: 20px; color: #dfe3ea; }
.date label { padding: 1px 0 0 14px; }
.date .input { margin-top: 8px; height: 40px; padding: 0 15px 1px 27px; }
.date .input span { letter-spacing: .52px; }
.input { display: flex; align-items: center; justify-content: space-between; border: 1px solid #5b6480; border-radius: 8px; background: #111d42; font-size: 14px; }
.input svg { width: 12px; height: 14px; }
.unit label { margin-top: -1px; }
.unit .input { margin-top: 11px; height: 38px; padding: 0 0 1px 17px; }
.search { margin-top: 14px; height: 40px; border-radius: 8px; background: #5e76e0; display: flex; align-items: center; justify-content: center; font-size: 14px; font-weight: 700; box-shadow: 0 4px 7px -1px rgba(94,110,150,.28); }

/* Map and trip panel */
.content { display: grid; grid-template-columns: 1180px 377px; gap: 24px; margin-top: 48px; height: 595px; }
.map { position: relative; background: #f2efe9; border-radius: 16px 16px 0 0; overflow: hidden; }
.zoom { position: absolute; left: 10px; top: 10px; width: 34px; height: 64px; border: 2px solid rgba(0,0,0,.22); border-radius: 4px; background: #fff; background-clip: padding-box; color: #000; display: flex; flex-direction: column; }
.zoom span { height: 30px; font: bold 22px/30px "Liberation Sans", sans-serif; text-align: center; }
.zoom span:first-child { height: 31px; line-height: 32px; border-bottom: 1px solid #ccc; }
.zoom span:last-child { line-height: 28px; }

.forest { fill: #c0dab5; }
.glade { fill: #f2efe9; }
.heath { fill: #d9dcae; }
.scrub { fill: #d5eebf; }
.lake { fill: #aad3df; }
.park { fill: none; stroke: #8fc493; stroke-width: 8; stroke-linejoin: round; opacity: .85; }
.park.thin { stroke-width: 5; }
.lines path { fill: none; stroke-linejoin: round; stroke-linecap: round; }
.lines .w { stroke: #a2d2e1; stroke-width: 5; }
.lines .wide { stroke-width: 9; }
.lines .b { stroke: #91a3c6; stroke-width: 5; }
.lines .a { stroke: #c2a9c6; stroke-width: 3.600; stroke-dasharray: 16 4 5 4; stroke-linecap: butt; }
.lines .g { stroke: #b9b8bb; stroke-width: 2.800; }
.lines .s { stroke: #d9cdc3; stroke-width: 9; }
.lines .p { stroke: #b79cb0; stroke-width: 9; }
.roads path { fill: none; stroke-linejoin: round; }
.roads .t { stroke: #f78f79; stroke-width: 6.500; }
.roads .o { stroke: #f9c27d; stroke-width: 6; }
.roads .o.wide { stroke-width: 9; }
.streets path { fill: none; stroke: #c4c2c0; stroke-width: 1; }
.route path { fill: none; stroke: #8a564b; stroke-width: 12.500; stroke-linejoin: round; }
.route.over { opacity: .8; }
.places text { font-family: "Noto Sans", sans-serif; font-size: 30px; text-anchor: middle; fill: #262626; stroke: #f6f4f0; stroke-width: 4.500; stroke-linejoin: round; paint-order: stroke; }
.places .region text { font-style: italic; fill: #946f96; }
.places .reserve text { font-style: italic; fill: #1c8a3c; font-size: 34px; stroke: #e0ecd8; stroke-width: 3; }
.places .city text { font-size: 41px; }
.plane { fill: #8461c4; }
.marker circle { fill: #fff; stroke: #e4e6e6; stroke-width: 1; }
.marker circle:nth-child(1), .marker circle:nth-child(4), .marker .solid { fill: #48b0bd; }
.marker circle:nth-child(2), .marker circle:nth-child(5) { stroke: #48b0bd; stroke-width: 2; }

.panel { display: flex; background: #1e294b; border-radius: 16px 0 0 0; overflow: hidden; }
.panel-body { width: 360px; padding: 24px 32px 0 16px; flex: none; }
.range { display: flex; align-items: center; gap: 5px; height: 22px; padding: 0 0 2px 1px; font-size: 14px; color: #ced3de; white-space: nowrap; }
.range svg { width: 18px; height: 20px; }
.range span { letter-spacing: -.02px; }
.total { margin: 40px 0 0; font-size: 12px; line-height: 20px; text-transform: uppercase; color: #d3d6dd; letter-spacing: .07px; }
.trips { list-style: none; margin: 16px 0 0; padding: 0; }
.trips li { display: flex; align-items: center; height: 65px; }
.trips svg { width: 26px; height: 26px; }
.trips div { margin-left: 15px; }
.trips b { display: block; font-size: 14px; line-height: 20px; font-weight: 600; }
.trips p { margin: 4px 0 0; font-size: 12px; line-height: 18px; color: #ced3de; white-space: nowrap; letter-spacing: .02px; }
.trips em { margin-left: auto; padding-bottom: 2px; font-style: normal; font-size: 14px; letter-spacing: .1px; white-space: nowrap; -webkit-background-clip: text; background-clip: text; color: transparent; }
.trips .last div { padding-bottom: 22px; }
.stop em { background-image: linear-gradient(to right, #f5593d, #f5365c); }
.move em { background-image: linear-gradient(to right, #2dc5c4, #2dce89); }
.ring { fill: none; stroke-width: 1; }
.stop .ring { stroke: #f5365c; }
.move .ring { stroke: #2dce89; }
.dot { fill: none; stroke: #f5365c; stroke-width: 3.800; }
.arr { fill: none; stroke: #2dce89; stroke-width: 1.900; }
.scroll { width: 17px; background: #f1f1f1; padding: 0 2px; }
.scroll svg { width: 17px; height: 17px; margin-left: -2px; }
.thumb { height: 506px; background: #c1c1c1; }
.fab { position: absolute; left: 1804px; top: 852px; width: 56px; height: 56px; border-radius: 50%; background: #fff; display: flex; align-items: center; justify-content: center; box-shadow: 0 2px 12px rgba(0,0,0,.16); }
.fab svg { width: 25px; height: 25px; }
```
